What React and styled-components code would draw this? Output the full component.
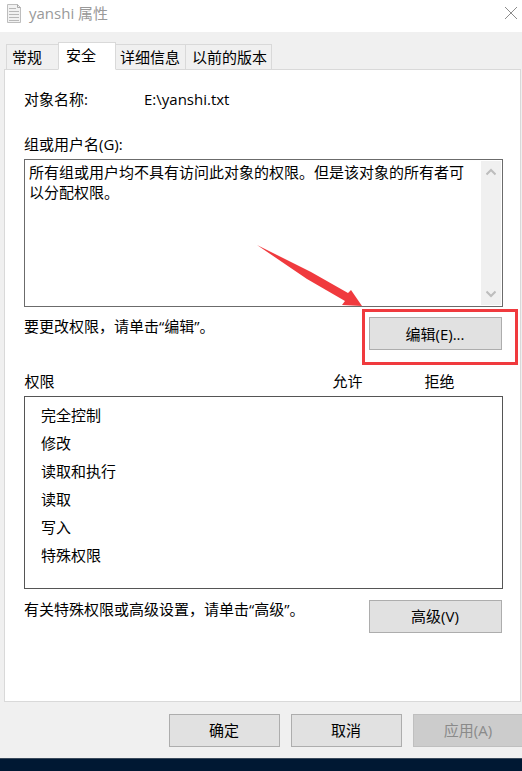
import React from 'react';
import styled, { createGlobalStyle } from 'styled-components';

const GlobalStyle = createGlobalStyle`
  * {
    box-sizing: border-box;
  }
  body {
    margin: 0;
    background: #001833;
    color: #000;
    font-family: "Open Sans", "Noto Sans CJK SC", sans-serif;
    font-size: 15px;
    line-height: 20px;
  }
  button, textarea {
    font: inherit;
    color: inherit;
  }
`;

const Desktop = styled.div`
  min-height: 100vh;
  overflow: hidden;
  background: #001833;
`;

const Dialog = styled.main`
  background: #f0f0f0;
  border-bottom: 1px solid #3a4a5c;
`;

const TitleBar = styled.header`
  display: flex;
  align-items: center;
  height: 32px;
  padding: 0 4px 6px 7px;
  background: #fff;
`;

const Title = styled.h1`
  flex: 1;
  margin: 0 0 0 8px;
  color: #999;
  font-size: 15px;
  font-weight: 400;
`;

const CloseButton = styled.button`
  display: flex;
  padding: 0;
  border: 0;
  background: none;
`;

const Tabs = styled.div`
  display: flex;
  align-items: flex-end;
  height: 38px;
  padding-left: 6px;
`;

const Tab = styled.button`
  height: ${props => props.$active ? '28px' : '26px'};
  padding-top: 0;
  padding-bottom: ${props => props.$active ? '3px' : '1px'};
  padding-left: ${props => props.$left}px;
  padding-right: ${props => props.$right}px;
  border: 1px solid #d9d9d9;
  border-left-width: ${props => props.$first || props.$active ? '1px' : '0'};
  border-right-width: ${props => props.$first ? '0' : '1px'};
  border-bottom-color: ${props => props.$active ? '#fff' : '#d9d9d9'};
  background: ${props => props.$active ? '#fff' : '#f0f0f0'};
  white-space: nowrap;
`;

const Pane = styled.section`
  margin: -1px 1px 0 4px;
  padding: 19px 17px 68px 19px;
  border: 1px solid #d9d9d9;
  background: #fff;
`;

const ObjectRow = styled.dl`
  display: grid;
  grid-template-columns: 120px 1fr;
  margin: 0 0 25px;

  dd {
    margin: 0;
  }
`;

const Label = styled.label`
  display: block;
  margin-bottom: 5px;
`;

const GroupBox = styled.div`
  display: flex;
  height: 148px;
  padding: 1px;
  border: 1px solid #6b6b6b;
`;

const GroupText = styled.textarea`
  flex: 1;
  min-width: 0;
  padding: 1px 8px 0 3px;
  border: 0;
  outline: 0;
  resize: none;
  overflow: hidden;
  background: transparent;
`;

const ScrollBar = styled.div`
  display: flex;
  flex-direction: column;
  justify-content: space-between;
  width: 20px;
  background: #f0f0f0;
`;

const ScrollButton = styled.button`
  display: flex;
  align-items: center;
  justify-content: center;
  height: 22px;
  padding: 0;
  border: 0;
  background: none;
`;

const HintRow = styled.div`
  display: flex;
  justify-content: space-between;
  margin-top: ${props => props.$gap}px;
  padding-right: 1px;
`;

const Hint = styled.p`
  margin: 0;
  line-height: 18px;
`;

const Button = styled.button`
  width: ${props => props.$small ? '111px' : '133px'};
  height: 33px;
  flex-shrink: 0;
  padding: 0 1px 0 0;
  border: 1px solid #adadad;
  background: #e1e1e1;

  &:disabled {
    border-color: #bfbfbf;
    background: #ccc;
    color: #8a8a8a;
  }
`;

const Marked = styled.div`
  position: relative;
  display: flex;
`;

const Highlight = styled.div`
  position: absolute;
  top: -8px;
  right: -16px;
  bottom: -15px;
  left: -7px;
  border: 3px solid #f03a3e;
  pointer-events: none;
`;

const Arrow = styled.svg`
  position: absolute;
  right: 139px;
  bottom: 43px;
  pointer-events: none;
`;

const Permissions = styled.table`
  width: 100%;
  margin-top: 20px;
  border-collapse: collapse;
  table-layout: fixed;

  th, td {
    padding: 0;
    text-align: left;
    font-weight: 400;
  }
  thead th {
    height: 26px;
    padding-bottom: 4px;
  }
  tbody {
    border: 1px solid #555;
  }
  tbody th {
    height: 28px;
    padding-left: 16px;
  }
  tbody tr:first-child th {
    height: 33px;
    padding-top: 5px;
  }
  tbody tr:last-child th {
    height: 47px;
    padding-bottom: 19px;
  }
`;

const AllowCol = styled.col`
  width: 92px;
`;

const DenyCol = styled.col`
  width: 78px;
`;

const Footer = styled.footer`
  display: flex;
  justify-content: flex-end;
  gap: 11px;
  margin-right: -2px;
  padding: 12px 0 11px;
`;

const rights = ['完全控制', '修改', '读取和执行', '读取', '写入', '特殊权限'];

const FileIcon = () => (
  <svg width="14" height="19" viewBox="0 0 14 19" fill="none" aria-hidden="true">
    <path d="M0.5 0.5H10.5L13.5 3.5V18.5H0.5Z" fill="#f2f2f2" stroke="#bdbdbd" />
    <path d="M10.5 0.5V3.5H13.5" stroke="#a8a8a8" />
    <path d="M2 4.5H9M2 7.5H12M2 10.5H12M2 13.5H12M2 16.5H12" stroke="#b8b8b8" />
  </svg>
);

const Chevron = ({ down }) => (
  <svg width="10" height="8" viewBox="0 0 10 8" fill="none" aria-hidden="true">
    <path d={down ? 'M0.5 1.5L5 6L9.5 1.5' : 'M0.5 6.5L5 2L9.5 6.5'} stroke="#bdbdbd" strokeWidth="2" />
  </svg>
);

const App = () => {
  return (
    <Desktop>
      <GlobalStyle />
      <Dialog>
        <TitleBar>
          <FileIcon />
          <Title>yanshi 属性</Title>
          <CloseButton aria-label="关闭">
            <svg width="14" height="14" viewBox="0 0 14 14" fill="none">
              <path d="M1 1L13 13M13 1L1 13" stroke="#8c8c8c" />
            </svg>
          </CloseButton>
        </TitleBar>

        <Tabs role="tablist">
          <Tab role="tab" aria-selected="false" $first $left={5} $right={16}>常规</Tab>
          <Tab role="tab" aria-selected="true" $active $left={7} $right={19}>安全</Tab>
          <Tab role="tab" aria-selected="false" $left={4} $right={5}>详细信息</Tab>
          <Tab role="tab" aria-selected="false" $left={6} $right={4}>以前的版本</Tab>
        </Tabs>

        <Pane role="tabpanel">
          <ObjectRow>
            <dt>对象名称:</dt>
            <dd>E:\yanshi.txt</dd>
          </ObjectRow>

          <Label htmlFor="groups">组或用户名(G):</Label>
          <GroupBox>
            <GroupText
              id="groups"
              readOnly
              value="所有组或用户均不具有访问此对象的权限。但是该对象的所有者可以分配权限。"
            />
            <ScrollBar>
              <ScrollButton aria-label="向上滚动"><Chevron /></ScrollButton>
              <ScrollButton aria-label="向下滚动"><Chevron down /></ScrollButton>
            </ScrollBar>
          </GroupBox>

          <HintRow $gap={10}>
            <Hint>要更改权限，请单击“编辑”。</Hint>
            <Marked>
              <Button>编辑(E)...</Button>
              <Highlight />
              <Arrow width="106" height="62" viewBox="0 0 106 62" aria-hidden="true">
                <path d="M0 0L54 27L91 48L94 45L105 61L85 60L88 56L50 34Z" fill="#f03a3e" />
              </Arrow>
            </Marked>
          </HintRow>

          <Permissions>
            <colgroup>
              <col />
              <AllowCol />
              <DenyCol />
            </colgroup>
            <thead>
              <tr>
                <th scope="col">权限</th>
                <th scope="col">允许</th>
                <th scope="col">拒绝</th>
              </tr>
            </thead>
            <tbody>
              {rights.map(name => (
                <tr key={name}>
                  <th scope="row">{name}</th>
                  <td />
                  <td />
                </tr>
              ))}
            </tbody>
          </Permissions>

          <HintRow $gap={11}>
            <Hint>有关特殊权限或高级设置，请单击“高级”。</Hint>
            <Button>高级(V)</Button>
          </HintRow>
        </Pane>

        <Footer>
          <Button $small>确定</Button>
          <Button $small>取消</Button>
          <Button $small disabled>应用(A)</Button>
        </Footer>
      </Dialog>
    </Desktop>
  );
};

export default App;
